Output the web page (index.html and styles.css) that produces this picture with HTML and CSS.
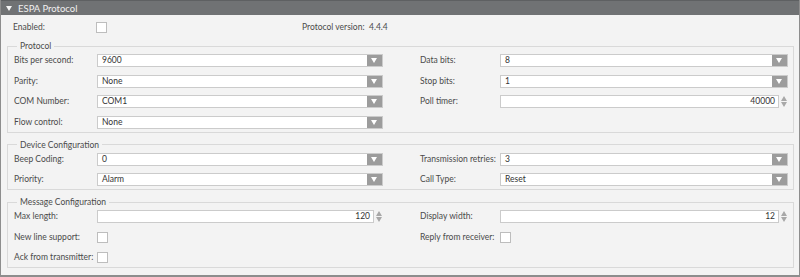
FILE: index.html
```html
<!DOCTYPE html>
<html lang="en">
<head>
  <meta charset="UTF-8">
  <title>ESPA Protocol</title>
  <link rel="stylesheet" href="styles.css">
</head>
<body>
  <div class="panel">
    <div class="panel-header">
      <span class="caret"></span>
      <span class="panel-title">ESPA Protocol</span>
    </div>

    <div class="panel-body">
      <div class="top-row">
        <span class="label">Enabled:</span>
        <span class="checkbox"></span>
        <span class="version-label">Protocol version:</span>
        <span class="version-value">4.4.4</span>
      </div>

      <fieldset class="group">
        <legend>Protocol</legend>
        <div class="grid">
          <span class="label">Bits per second:</span>
          <div class="select"><span class="value">9600</span><span class="arrow"></span></div>
          <span class="label right">Data bits:</span>
          <div class="select"><span class="value">8</span><span class="arrow"></span></div>

          <span class="label">Parity:</span>
          <div class="select"><span class="value">None</span><span class="arrow"></span></div>
          <span class="label right">Stop bits:</span>
          <div class="select"><span class="value">1</span><span class="arrow"></span></div>

          <span class="label">COM Number:</span>
          <div class="select"><span class="value">COM1</span><span class="arrow"></span></div>
          <span class="label right">Poll timer:</span>
          <div class="spin"><div class="number">40000</div><span class="spinner"><i class="up"></i><i class="down"></i></span></div>

          <span class="label">Flow control:</span>
          <div class="select"><span class="value">None</span><span class="arrow"></span></div>
        </div>
      </fieldset>

      <fieldset class="group">
        <legend>Device Configuration</legend>
        <div class="grid">
          <span class="label">Beep Coding:</span>
          <div class="select"><span class="value">0</span><span class="arrow"></span></div>
          <span class="label right">Transmission retries:</span>
          <div class="select"><span class="value">3</span><span class="arrow"></span></div>

          <span class="label">Priority:</span>
          <div class="select"><span class="value">Alarm</span><span class="arrow"></span></div>
          <span class="label right">Call Type:</span>
          <div class="select"><span class="value">Reset</span><span class="arrow"></span></div>
        </div>
      </fieldset>

      <fieldset class="group">
        <legend>Message Configuration</legend>
        <div class="grid">
          <span class="label">Max length:</span>
          <div class="spin"><div class="number">120</div><span class="spinner"><i class="up"></i><i class="down"></i></span></div>
          <span class="label right">Display width:</span>
          <div class="spin"><div class="number">12</div><span class="spinner"><i class="up"></i><i class="down"></i></span></div>

          <span class="label">New line support:</span>
          <div class="cell"><span class="checkbox"></span></div>
          <span class="label right">Reply from receiver:</span>
          <div class="cell"><span class="checkbox"></span></div>

          <span class="label">Ack from transmitter:</span>
          <div class="cell"><span class="checkbox"></span></div>
        </div>
      </fieldset>
    </div>
  </div>
</body>
</html>
```

FILE: styles.css
```css
* {
  box-sizing: border-box;
  margin: 0;
  padding: 0;
}

html, body {
  width: 800px;
  height: 277px;
  overflow: hidden;
  background: #ffffff;
}

body {
  font-family: 'Segoe UI', Lato, 'Liberation Sans', sans-serif;
  font-size: 8.5px;
  color: #4a4a4a;
}

.panel {
  width: 800px;
  height: 277px;
  background: #f3f3f3;
  border: 1px solid #8d8d8d;
  border-top: none;
  border-bottom-width: 2px;
}

.panel-header {
  height: 15px;
  background: #707274;
  border-top: 1px solid #5e6062;
  display: flex;
  align-items: center;
  padding-left: 5px;
  color: #f0f0f0;
}

.caret {
  width: 0;
  height: 0;
  border-left: 3.5px solid transparent;
  border-right: 3.5px solid transparent;
  border-top: 5px solid #f4f4f4;
  margin-right: 6px;
}

.panel-title {
  font-size: 9.5px;
}

.panel-body {
  padding: 5px 5px 0 6px;
}

.top-row {
  display: grid;
  grid-template-columns: 83px 206px 62px 1fr;
  align-items: center;
  height: 14px;
  padding-left: 6px;
  margin-bottom: 6px;
  white-space: nowrap;
}

.version-value {
  padding-left: 5px;
}

.checkbox {
  display: block;
  width: 11px;
  height: 11px;
  background: #ffffff;
  border: 1px solid #bdbdbd;
}

.group {
  border: 1px solid #d9d9d9;
  padding: 2px 5px 3px 6px;
  margin-bottom: 6px;
  min-width: 0;
}

.group legend {
  padding: 0 3px;
  margin-left: 3px;
  line-height: 12px;
}

.grid {
  display: grid;
  grid-template-columns: 83px 286px 117px 1fr;
  grid-auto-rows: 13px;
  row-gap: 7.5px;
  align-items: center;
}

.label {
  white-space: nowrap;
  line-height: 13px;
}

.label.right {
  padding-left: 37px;
}

.cell {
  display: flex;
  align-items: center;
}

.select {
  height: 13px;
  display: flex;
  background: #ffffff;
  border: 1px solid #cbcbcb;
}

.select .value {
  flex: 1;
  line-height: 11px;
  padding-left: 4px;
  color: #333333;
}

.select .arrow {
  width: 15px;
  background: #9c9c9c;
  position: relative;
}

.select .arrow::after {
  content: "";
  position: absolute;
  left: 4px;
  top: 3px;
  border-left: 3.5px solid transparent;
  border-right: 3.5px solid transparent;
  border-top: 5px solid #ffffff;
}

.spin {
  height: 13px;
  display: flex;
  align-items: center;
}

.spin .number {
  flex: 1;
  height: 13px;
  line-height: 11px;
  background: #ffffff;
  border: 1px solid #cbcbcb;
  text-align: right;
  padding-right: 3px;
  color: #333333;
}

.spinner {
  width: 9px;
  display: flex;
  flex-direction: column;
  align-items: center;
  gap: 1px;
}

.spinner i {
  display: block;
  width: 0;
  height: 0;
  border-left: 3px solid transparent;
  border-right: 3px solid transparent;
}

.spinner .up {
  border-bottom: 5px solid #a8a8a8;
}

.spinner .down {
  border-top: 5px solid #a8a8a8;
}
```
